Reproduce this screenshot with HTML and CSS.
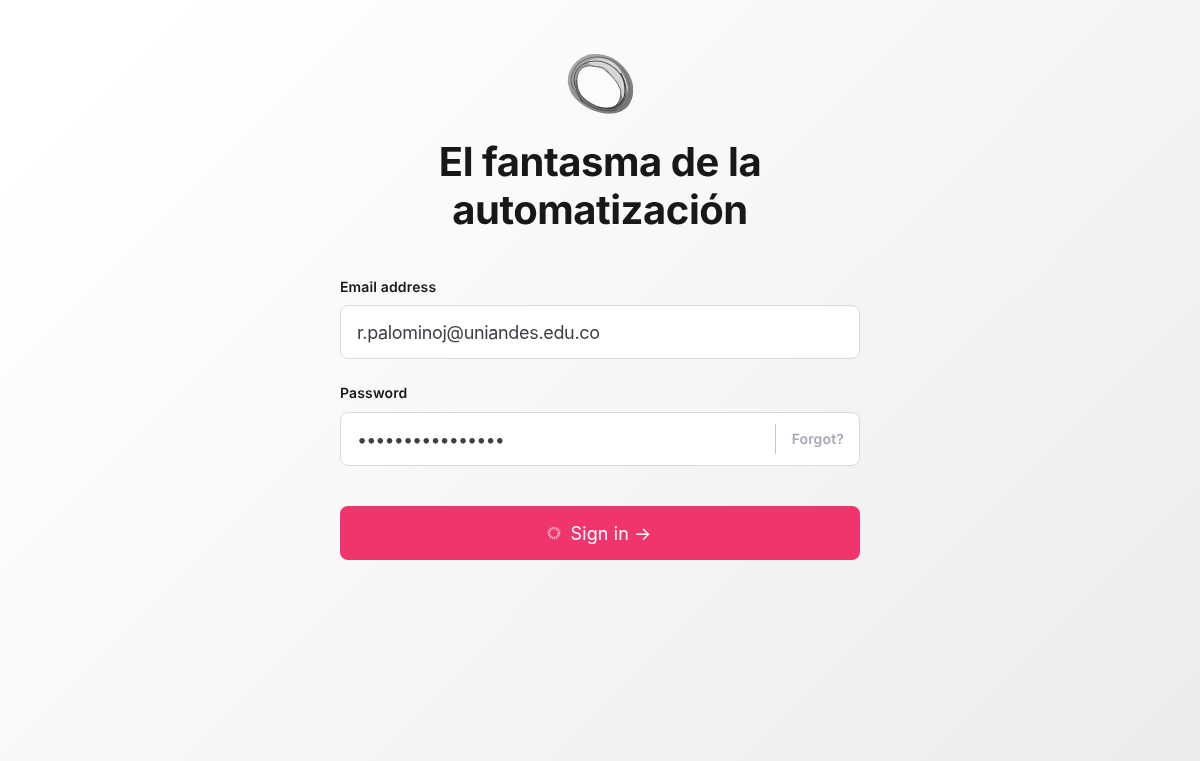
FILE: index.html
```html
<!DOCTYPE html>
<html lang="es">
<head>
<meta charset="utf-8">
<title>Sign in</title>
<link rel="stylesheet" href="styles.css">
</head>
<body>
<main class="page">
  <svg class="logo" width="66" height="62" viewBox="18 13 64 62" preserveAspectRatio="none" aria-hidden="true">
    <defs>
      <linearGradient id="ring" x1="0" y1="0" x2="1" y2="1">
        <stop offset="0" stop-color="#b4b4b4"/>
        <stop offset=".5" stop-color="#8f8f8f"/>
        <stop offset="1" stop-color="#727272"/>
      </linearGradient>
    </defs>
    <path d="M19 38C20 27 30 15 43 14 54 13 68 18 76 31 84 42 84 56 78 65 72 73 62 75 52 73 40 71 27 62 22 53 20 48 18 43 19 38Z" fill="url(#ring)"/>
    <path d="M38 22C44 17 54 17 62 22 69 27 75 37 77 47 77 53 75 57 72 59 70 50 66 42 61 35 57 29 52 26 47 26 44 26 40 25 38 22Z" fill="#d6d6d6"/>
    <path d="M28 36C30 28 36 25 42 26 48 27 54 27 57 32 62 36 67 42 70 50 71 58 68 66 60 68 50 70 38 64 32 56 28 50 27 42 28 36Z" fill="#fbfbfb"/>
    <g fill="none" stroke-linejoin="round">
      <path d="M28 36C30 28 36 25 42 26 48 27 54 27 57 32 62 36 67 42 70 50 71 58 68 66 60 68 50 70 38 64 32 56 28 50 27 42 28 36Z" stroke="#5a5a5a" stroke-width=".9"/>
      <path d="M25 38C26 27 36 21 46 21 56 21 66 27 72 38 77 47 77 60 68 67 60 72 46 68 36 60 29 54 24 46 25 38Z" stroke="#5a5a5a" stroke-width="1"/>
      <path d="M22 40C23 27 33 17 46 17 57 16 69 23 75 34 80 44 81 58 74 65 67 72 54 72 42 66 32 60 22 50 22 40Z" stroke="#6e6e6e" stroke-width="1"/>
      <path d="M70 33C75 42 76 55 71 62 66 68 58 70 48 67" stroke="#3e3e3e" stroke-width="1.2"/>
      <path d="M34 62C28 56 26 48 27 40" stroke="#555" stroke-width="1"/>
      <path d="M30 59C40 68 54 73 66 70" stroke="#484848" stroke-width=".9"/>
    </g>
  </svg>
  <h1 class="title">El fantasma de la automatización</h1>
  <form class="form">
    <div class="field">
      <label class="label" for="email">Email address</label>
      <div class="input-box">
        <input class="input" id="email" type="text" value="r.palominoj@uniandes.edu.co">
      </div>
    </div>
    <div class="field">
      <label class="label label-pass" for="password">Password</label>
      <div class="input-box">
        <input class="input input-pass" id="password" type="password" value="aaaaaaaaaaaaaaaa">
        <a class="forgot" href="#">Forgot?</a>
      </div>
    </div>
    <button class="submit" type="button">
      <svg class="spinner" width="14" height="14" viewBox="0 0 14 14" aria-hidden="true">
        <circle cx="7" cy="7" r="5" fill="none" stroke="#fbb0c6" stroke-width="2.6" stroke-dasharray="1.35 .75"/>
      </svg>
      <span>Sign in →</span>
    </button>
  </form>
</main>
</body>
</html>
```
FILE: styles.css
```css
* { box-sizing: border-box; }
html, body { height: 100%; }
body {
  margin: 0;
  font-family: Inter, "Liberation Sans", sans-serif;
  background: linear-gradient(135deg, #ffffff 10%, #ececec 100%);
  color: #18181b;
  text-rendering: geometricPrecision;
}
.page {
  width: 520px;
  margin: 0 auto;
  padding-top: 53px;
  display: flex;
  flex-direction: column;
  align-items: center;
  will-change: opacity;
}
.logo { display: block; }
.title {
  margin: 23px 0 0;
  width: 384px;
  font-size: 40px;
  line-height: 48px;
  font-weight: 700;
  letter-spacing: -0.0115em;
  text-align: center;
  color: #18181b;
}
.form {
  width: 100%;
  margin-top: 44px;
  display: flex;
  flex-direction: column;
}
.field { margin-bottom: 25px; }
.field + .field { margin-bottom: 40px; }
.label {
  display: block;
  font-size: 14px;
  line-height: 20px;
  font-weight: 600;
  letter-spacing: 0.01em;
  color: #18181b;
  margin-bottom: 7px;
}
.label-pass { margin-bottom: 8px; }
.input-box {
  height: 54px;
  display: flex;
  align-items: center;
  background: #fff;
  border: 1px solid #d9d9dc;
  border-radius: 8px;
}
.input {
  flex: 1;
  min-width: 0;
  height: 100%;
  padding: 0 16px;
  border: 0;
  outline: 0;
  background: transparent;
  font-family: inherit;
  font-size: 18px;
  letter-spacing: -0.33px;
  color: #3f3f46;
  border-radius: 8px;
}
.input-pass { letter-spacing: -0.95px; }
.forgot {
  height: 30px;
  display: flex;
  align-items: center;
  padding: 0 15px 0 16px;
  border-left: 1px solid #c4c4c8;
  font-size: 14px;
  font-weight: 600;
  letter-spacing: 0.01em;
  color: #a7a9b4;
  text-decoration: none;
}
.submit {
  height: 54px;
  display: flex;
  align-items: center;
  justify-content: center;
  gap: 10px;
  padding: 0 2px 0 0;
  border: 0;
  border-radius: 8px;
  background: #f0346c;
  color: #fff;
  font-family: inherit;
  font-size: 18px;
  font-weight: 400;
  letter-spacing: 0.1px;
}
```
